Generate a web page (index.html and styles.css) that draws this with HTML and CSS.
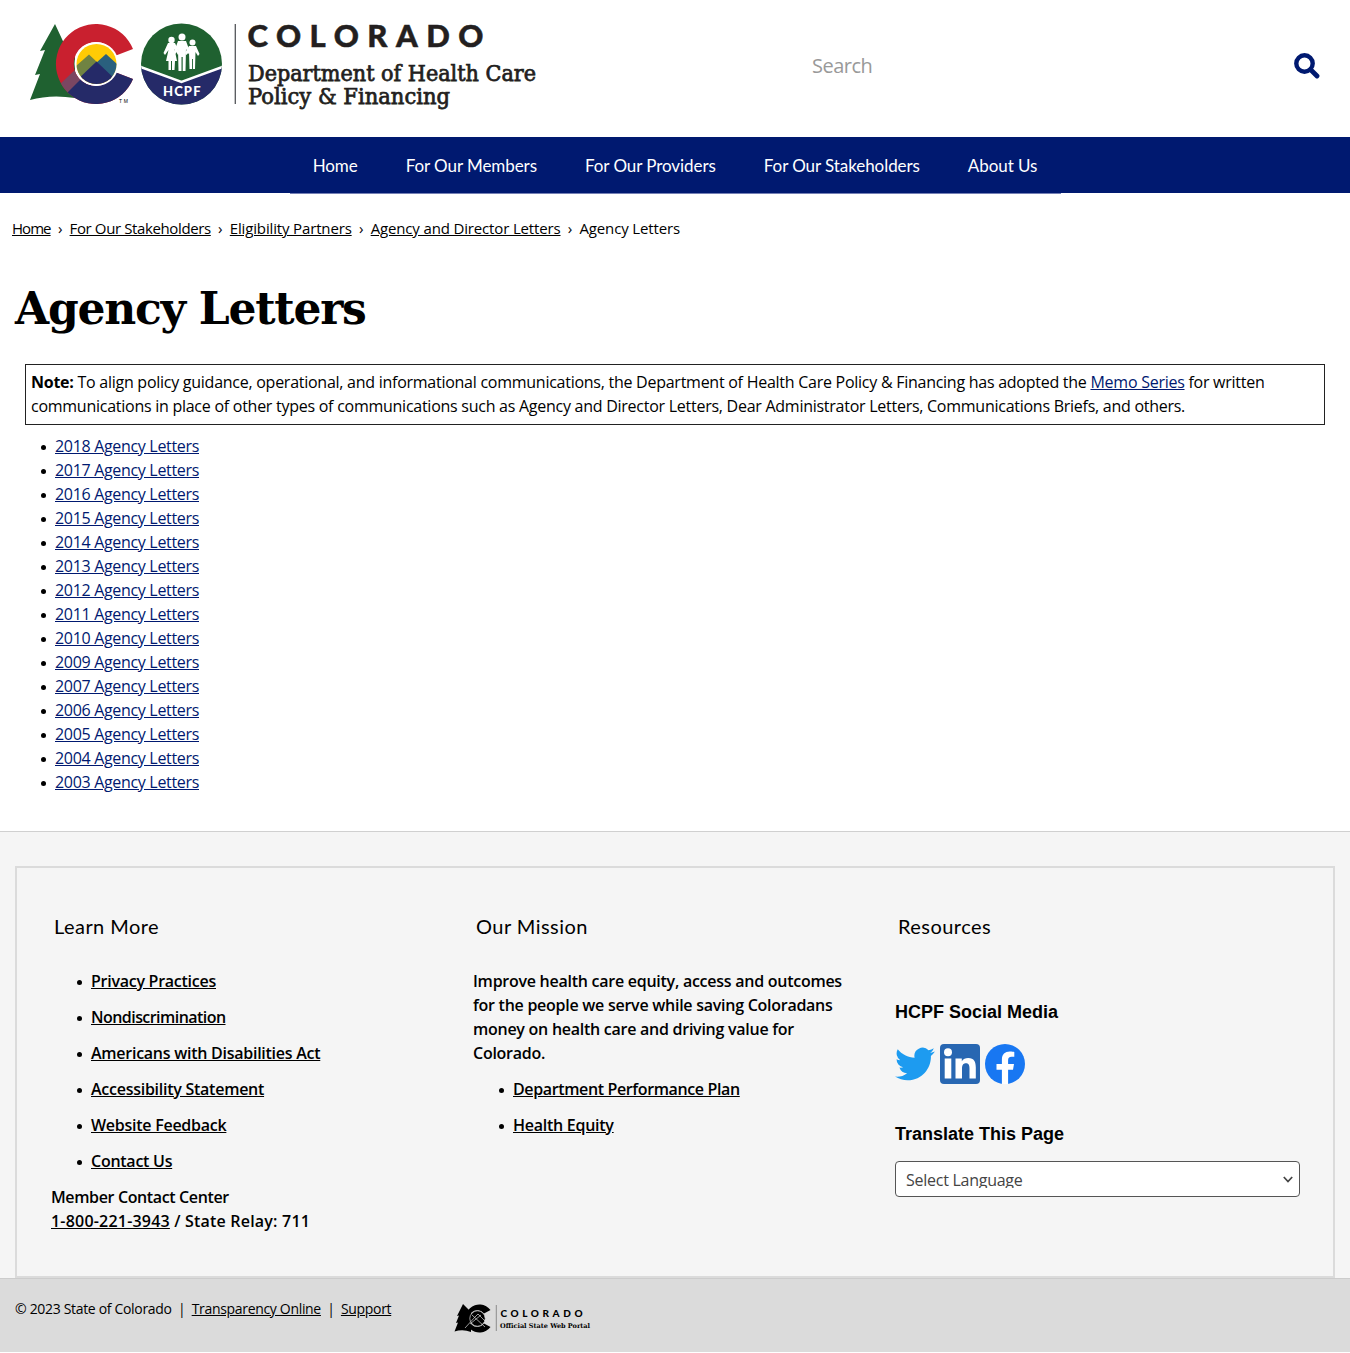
FILE: index.html
```html
<!DOCTYPE html>
<html lang="en">
<head>
<meta charset="utf-8">
<title>Agency Letters</title>
<link rel="stylesheet" href="styles.css">
</head>
<body>
<header class="header">
  <svg class="logo" width="530" height="100" viewBox="20 15 530 100" role="img" aria-label="Colorado Department of Health Care Policy &amp; Financing">
    <defs>
      <clipPath id="badge"><circle cx="181.500" cy="64" r="40.500"/></clipPath>
      <clipPath id="sun"><circle cx="96.500" cy="64" r="20"/></clipPath>
      <clipPath id="c"><path d="M133 49A40 40 0 1 0 133 79L116 72.500A22 22 0 1 1 116 55.500Z"/></clipPath>
    </defs>
    <path fill="#1f6130" d="M55 24L40 51L45 50L35 75L40 74L30 100Q51 94 75 98V50L68 52Z"/>
    <path fill="#c9202f" d="M133 49A40 40 0 1 0 133 79L116 72.500A22 22 0 1 1 116 55.500Z"/>
    <g clip-path="url(#c)">
      <path fill="#7b4662" d="M57 87L78 67L90 80L66 100Z"/>
      <path fill="#252a68" d="M64 96L83 77L120 70L140 70V110H64Z"/>
    </g>
    <circle cx="96.500" cy="64" r="22" fill="#fff"/>
    <g clip-path="url(#sun)">
      <path fill="#ffcb05" d="M75 43H118V86H75Z"/>
      <path fill="#708342" d="M75 67L89 54.500L98 63L84 78H75Z"/>
      <path fill="#2a607e" d="M96 63L106 54L118 65V80H105Z"/>
      <path fill="#252a68" d="M75 82L96.500 61.500L118 82V86H75Z"/>
    </g>
    <text class="tm" x="119" y="103" textLength="9">TM</text>
    <g clip-path="url(#badge)">
      <path fill="#1f6130" d="M140 22H223V105H140Z"/>
      <path fill="#252a68" stroke="#fff" stroke-width="2.500" d="M138 66L181.500 82L225 66V108H138Z"/>
    </g>
    <g fill="#fff">
      <circle cx="171.500" cy="40" r="3.200"/><circle cx="182" cy="37" r="3.500"/><circle cx="192.500" cy="42.500" r="3"/>
      <path d="M168 43H175L179.500 53L178 55L174.500 49L177 61H175L174.500 70H172V61H171V70H168.500V61H166L168.500 50L165 55L163.500 53Z"/>
      <path d="M178 41H186L190 52L188.500 54L186 49L185.500 71H182.700V57H181.500V71H178.500L178 49L175.500 54L174 52Z"/>
      <path d="M189 46H196L199.500 54L198 56L195.500 52L195 69H192.900V59H192V69H189.500L189 52L186.500 55L185 53Z"/>
    </g>
    <text class="hcpf" x="163" y="96" textLength="37.500">HCPF</text>
    <path stroke="#54565a" stroke-width="1.300" d="M235.300 24V104"/>
    <text class="state" x="247.500" y="47" textLength="236">COLORADO</text>
    <text class="dept" x="248" y="81" textLength="288" lengthAdjust="spacingAndGlyphs">Department of Health Care</text>
    <text class="dept" x="248" y="104" textLength="202" lengthAdjust="spacingAndGlyphs">Policy &amp; Financing</text>
  </svg>
  <div class="search">
    <span>Search</span>
    <svg width="26" height="26" viewBox="0 0 26 26"><circle cx="10.500" cy="10.500" r="8.200" fill="none" stroke="#001970" stroke-width="4.400"/><path d="M16.500 16.500L23 23" stroke="#001970" stroke-width="4.800" stroke-linecap="round"/></svg>
  </div>
</header>
<nav class="nav">
  <div class="menu"><a>Home</a><a>For Our Members</a><a>For Our Providers</a><a>For Our Stakeholders</a><a>About Us</a></div>
</nav>
<main class="main">
  <div class="crumbs"><a class="crumb-home">Home</a><i>›</i><a class="crumb-tight">For Our Stakeholders</a><i>›</i><a>Eligibility Partners</a><i>›</i><a>Agency and Director Letters</a><i>›</i><span>Agency Letters</span></div>
  <h1 class="title">Agency Letters</h1>
  <p class="note"><b>Note:</b> To align policy guidance, operational, and informational communications, the Department of Health Care Policy &amp; Financing has adopted the <a>Memo Series</a> for written<br>communications in place of other types of communications such as Agency and Director Letters, Dear Administrator Letters, Communications Briefs, and others.</p>
  <ul class="letters">
    <li><a>2018 Agency Letters</a></li>
    <li><a>2017 Agency Letters</a></li>
    <li><a>2016 Agency Letters</a></li>
    <li><a>2015 Agency Letters</a></li>
    <li><a>2014 Agency Letters</a></li>
    <li><a>2013 Agency Letters</a></li>
    <li><a>2012 Agency Letters</a></li>
    <li><a>2011 Agency Letters</a></li>
    <li><a>2010 Agency Letters</a></li>
    <li><a>2009 Agency Letters</a></li>
    <li><a>2007 Agency Letters</a></li>
    <li><a>2006 Agency Letters</a></li>
    <li><a>2005 Agency Letters</a></li>
    <li><a>2004 Agency Letters</a></li>
    <li><a>2003 Agency Letters</a></li>
  </ul>
</main>
<footer class="footer">
  <div class="panel">
    <section>
      <h2>Learn More</h2>
      <ul class="links">
        <li><a>Privacy Practices</a></li>
        <li class="tight"><a>Nondiscrimination</a></li>
        <li><a>Americans with Disabilities Act</a></li>
        <li><a>Accessibility Statement</a></li>
        <li><a>Website Feedback</a></li>
        <li><a>Contact Us</a></li>
      </ul>
      <p><span class="contact">Member Contact Center</span><br><span class="phone"><a>1-800-221-3943</a> / State Relay: 711</span></p>
    </section>
    <section>
      <h2>Our Mission</h2>
      <p>Improve health care equity, access and outcomes<br>for the people we serve while saving Coloradans<br>money on health care and driving value for<br>Colorado.</p>
      <ul class="links">
        <li class="contact"><a>Department Performance Plan</a></li>
        <li><a>Health Equity</a></li>
      </ul>
    </section>
    <section>
      <h2>Resources</h2>
      <h3 class="social-title">HCPF Social Media</h3>
      <div class="social">
        <svg width="40" height="40" viewBox="0 0 24 24"><path fill="#1d9bf0" d="M23.950 4.570a10 10 0 0 1-2.820.77 4.960 4.960 0 0 0 2.160-2.720c-.95.550-2 .950-3.130 1.180a4.920 4.920 0 0 0-8.380 4.480C7.690 8.100 4.070 6.130 1.640 3.160a4.920 4.920 0 0 0 1.520 6.570 4.900 4.900 0 0 1-2.230-.61v.06a4.920 4.920 0 0 0 3.950 4.830 5 5 0 0 1-2.210.08 4.940 4.940 0 0 0 4.600 3.420A9.870 9.870 0 0 1 0 19.540a13.990 13.990 0 0 0 7.550 2.210c9.060 0 14-7.500 14-13.980 0-.21 0-.42-.02-.63a9.940 9.940 0 0 0 2.420-2.570z"/></svg>
        <svg width="40" height="40" viewBox="0 0 40 40"><rect width="40" height="40" rx="4" fill="#2867b2"/><g fill="#fff"><circle cx="8" cy="8.300" r="4"/><path d="M4.700 14.500H11.300V34.500H4.700ZM15.500 14.500H21.800V17.300C23.200 15 25.500 14 28.200 14C34.300 14 35.800 18 35.800 23.400V34.500H29.500V24.700C29.500 21.800 29 19.300 26 19.300C23 19.300 22 21.500 22 24.600V34.500H15.500Z"/></g></svg>
        <svg width="40" height="40" viewBox="0 0 40 40"><circle cx="20" cy="20" r="20" fill="#1877f2"/><path fill="#fff" d="M16.900 40V25.700H11.500V20H16.900V15.500C16.900 10.200 20 7.500 24.800 7.500C27 7.500 28.500 7.800 29.300 8V12.800H26.600C24 12.800 23.100 14.400 23.100 16.200V20H29L28 25.700H23.100V40Z"/></svg>
      </div>
      <h3 class="translate-title">Translate This Page</h3>
      <div class="select"><span>Select Language</span><svg width="10" height="7" viewBox="0 0 10 7"><path d="M.8 1L5 5.500L9.200 1" fill="none" stroke="#444" stroke-width="1.700"/></svg></div>
    </section>
  </div>
</footer>
<div class="bottom">
  <div class="legal"><span>© 2023 State of Colorado</span><i>|</i><a>Transparency Online</a><i>|</i><a>Support</a></div>
  <svg class="portal" width="140" height="32" viewBox="452 1302 140 32">
    <path d="M463 1304L457 1316L459 1315.500L456 1323L458 1322.500L454.500 1331.500Q463 1329 471 1332V1312Z"/>
    <path d="M490.500 1310A14 14 0 1 0 490.500 1327L484 1323.500A8.300 8.300 0 1 1 484 1313.500Z"/>
    <circle cx="477.500" cy="1318.500" r="7.700" stroke="#dbdbdb" stroke-width=".7"/>
    <path fill="none" stroke="#dbdbdb" stroke-width=".7" d="M465 1328L475 1317L478 1314L485 1321M472 1315L485 1327M470 1324L481 1315"/>
    <path stroke="#777" stroke-width=".8" d="M496.300 1305V1331"/>
    <text class="portal-state" x="500.500" y="1316.500" textLength="82">COLORADO</text>
    <text class="portal-sub" x="500" y="1328" textLength="90" lengthAdjust="spacingAndGlyphs">Official State Web Portal</text>
  </svg>
</div>
</body>
</html>
```
FILE: styles.css
```css
* { box-sizing: border-box; }
body { margin: 0; background: #fff; color: #000; font: 16px/24px "Open Sans", sans-serif; letter-spacing: -.26px; }
h1, h2, h3, p, ul { margin: 0; padding: 0; }
i { font-style: normal; }
a { text-decoration: underline; }
svg text { letter-spacing: 0; }
.header { height: 137px; display: flex; justify-content: space-between; align-items: flex-start; padding: 15px 30px 0 20px; }
.logo { overflow: visible; }
.tm { font: 5px "Liberation Sans", sans-serif; }
.hcpf { font: 900 13px Lato, sans-serif; fill: #fff; }
.state { font: 900 31px Lato, sans-serif; fill: #231f20; stroke: #231f20; stroke-width: .5px; }
.dept { font: 400 21.5px "DejaVu Serif", serif; fill: #231f20; stroke: #231f20; stroke-width: .75px; }
.search { width: 508px; height: 102px; display: flex; align-items: center; justify-content: space-between; color: #999; font-size: 20px; letter-spacing: -.5px; }
.nav { height: 56px; background: #001970; display: flex; justify-content: center; align-items: flex-start; }
.menu { width: 771px; height: 57px; display: flex; justify-content: center; align-items: center; gap: 48px; border-bottom: 1px solid #7580b5; letter-spacing: -.07px; }
.menu a { color: #fff; text-decoration: none; font-family: Lato, sans-serif; font-size: 17px; padding-top: 1px; }
.main { height: 638px; padding-top: 23px; }
.crumbs { display: flex; padding-left: 12px; font-size: 15px; letter-spacing: -.15px; }
.crumbs i { width: 19px; text-align: center; }
.crumb-home { letter-spacing: -.95px; }
.crumb-tight { letter-spacing: -.38px; }
.title { font: 700 44px/60px "DejaVu Serif", serif; letter-spacing: -1.25px; padding: 39px 15px 0; height: 124px; }
.note { margin: 0 25px; height: 61px; border: 1px solid #222; padding: 5px; white-space: nowrap; }
.note a, .letters a { color: #001970; }
.letters { margin-top: 9px; padding-left: 55px; letter-spacing: -.32px; }
ul { list-style: none; }
li { display: flex; align-items: center; gap: 8px; margin-left: -14px; }
li::before { content: ""; width: 5px; height: 5px; margin: 2px 1px 0 0; border-radius: 50%; background: #000; }
.footer { height: 447px; background: #f5f5f5; border-top: 1px solid #d0d0d0; padding: 34px 15px 0; }
.panel { height: 412px; border: 2px solid #dbdbdb; padding: 46px 34px 0; display: grid; grid-template-columns: 422px 422px 405px; font-weight: 600; }
.panel h2 { font: 400 20px/24px Lato, sans-serif; letter-spacing: .45px; padding-left: 3px; margin-bottom: 31px; }
.links { padding-left: 40px; }
.links li { margin-bottom: 12px; }
.links .tight { letter-spacing: -.55px; }
.contact { letter-spacing: -.37px; }
.phone { letter-spacing: .2px; }
.panel p + .links { margin-top: 12px; }
.panel h3 { font: 700 18px/24px "Liberation Sans", sans-serif; letter-spacing: 0; }
.panel .social-title { margin-top: 62px; }
.social { display: flex; gap: 5px; margin: 20px 0 38px; }
.select { margin-top: 15px; width: 405px; height: 36px; border: 1px solid #555; border-radius: 4px; background: #fff; display: flex; align-items: center; justify-content: space-between; padding: 0 6px 0 10px; font-weight: 400; color: #444; }
.select span { height: 17px; line-height: 18px; overflow: hidden; }
.bottom { height: 74px; background: #dbdbdb; border-top: 1px solid #ccc; display: flex; padding: 18px 15px; font-size: 14px; letter-spacing: -.32px; }
.legal { display: flex; width: 437px; }
.legal i { width: 20px; text-align: center; }
.portal { margin-top: 5px; }
.portal-state { font: 900 10px Lato, sans-serif; }
.portal-sub { font: 700 6.500px "DejaVu Serif", serif; }
```
